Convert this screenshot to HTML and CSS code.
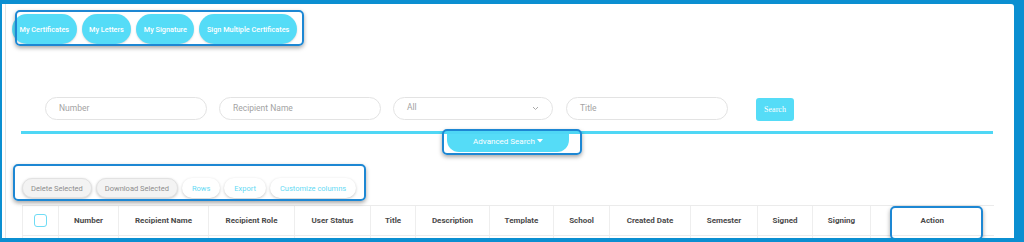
FILE: index.html
```html
<!DOCTYPE html>
<html lang="en">
<head>
  <meta charset="UTF-8">
  <title>Certificates</title>
  <link rel="stylesheet" href="styles.css">
</head>
<body>
  <div class="frame">
    <div class="mark nav-mark">
      <nav class="nav">
        <button class="pill">My Certificates</button>
        <button class="pill">My Letters</button>
        <button class="pill">My Signature</button>
        <button class="pill">Sign Multiple Certificates</button>
      </nav>
    </div>

    <div class="filters">
      <div class="field">Number</div>
      <div class="field">Recipient Name</div>
      <div class="field select">
        <span>All</span>
        <svg width="7" height="5" viewBox="0 0 7 5"><path d="M1 1 L3.5 3.5 L6 1" fill="none" stroke="#aaa" stroke-width="1"/></svg>
      </div>
      <div class="field">Title</div>
      <button class="search-btn">Search</button>
    </div>

    <div class="rule"></div>

    <div class="mark adv-mark">
      <button class="adv-btn">Advanced Search <svg class="caret" width="6" height="4" viewBox="0 0 6 4"><path d="M0 0 H6 L3 3.5 Z" fill="#fff"/></svg></button>
    </div>

    <div class="mark tools-mark">
      <div class="tools">
        <button class="tool muted">Delete Selected</button>
        <button class="tool muted">Download Selected</button>
        <button class="tool">Rows</button>
        <button class="tool">Export</button>
        <button class="tool">Customize columns</button>
      </div>
    </div>

    <table class="grid">
      <colgroup>
        <col style="width:36px"><col style="width:60px"><col style="width:90px"><col style="width:86px">
        <col style="width:76px"><col style="width:45px"><col style="width:74px"><col style="width:64px">
        <col style="width:56px"><col style="width:81px"><col style="width:67px"><col style="width:55px">
        <col style="width:58px"><col style="width:123px">
      </colgroup>
      <thead>
        <tr>
          <th><span class="check"></span></th>
          <th>Number</th>
          <th>Recipient Name</th>
          <th>Recipient Role</th>
          <th>User Status</th>
          <th>Title</th>
          <th>Description</th>
          <th>Template</th>
          <th>School</th>
          <th>Created Date</th>
          <th>Semester</th>
          <th>Signed</th>
          <th>Signing</th>
          <th class="action">Action</th>
        </tr>
      </thead>
      <tbody>
        <tr><td></td><td></td><td></td><td></td><td></td><td></td><td></td><td></td><td></td><td></td><td></td><td></td><td></td><td></td></tr>
      </tbody>
    </table>
  </div>
</body>
</html>
```

FILE: styles.css
```css
body {
  margin: 0;
  height: 242px;
  overflow: hidden;
  background: #0b8fd1;
  font-family: Roboto, "Liberation Sans", sans-serif;
}
.frame {
  margin: 4px 10px 0 2px;
  height: 234px;
  background: #fff;
  border-top-right-radius: 3px;
  overflow: hidden;
  box-shadow: inset 3px 0 0 #fff, inset 4px 0 0 #e4e4e4;
}
button {
  font-family: inherit;
  border: none;
  cursor: pointer;
  padding: 0;
  white-space: nowrap;
}

/* highlight boxes drawn over the content */
.mark {
  position: relative;
  box-sizing: border-box;
}
.mark::after {
  content: '';
  position: absolute;
  inset: 0;
  border: 2px solid #1d87d3;
  border-radius: 5px;
  box-shadow: 0 2px 4px rgba(0,0,0,0.35);
  pointer-events: none;
}

.nav-mark {
  margin: 6px 0 0 13px;
  width: 289px;
  height: 36px;
  padding-top: 4px;
}
.nav {
  display: flex;
  gap: 5px;
  margin-left: -3px;
}
.pill {
  flex: none;
  height: 30px;
  padding: 0 7.5px;
  border-radius: 15px;
  background: #55dcf7;
  color: #fff;
  font-size: 7.3px;
  font-weight: 500;
  box-shadow: 0 1px 2px rgba(0,0,0,0.15);
}

.filters {
  display: flex;
  align-items: flex-start;
  margin: 51px 0 0 43px;
}
.field {
  box-sizing: border-box;
  width: 162px;
  height: 23px;
  margin-right: 12px;
  padding-left: 13px;
  border: 1px solid #e3e3e3;
  border-radius: 12px;
  color: #a3a3a3;
  font-size: 8.5px;
  line-height: 21px;
}
.field.select {
  width: 160px;
  margin-right: 13px;
  display: flex;
  align-items: center;
  justify-content: space-between;
  padding-right: 13px;
}
.field.select span { margin-top: -2px; }
.field:nth-child(4) { margin-right: 28px; }
.search-btn {
  width: 38px;
  height: 23px;
  margin-top: 1px;
  border-radius: 3px;
  background: #55dcf7;
  color: #fff;
  font-family: "Liberation Serif", serif;
  font-size: 8px;
}

.rule {
  margin: 10px 0 0 19px;
  width: 972px;
  height: 3px;
  background: #4fd7f5;
}

.adv-mark {
  margin: -5px 0 0 440px;
  width: 140px;
  height: 26px;
  padding: 5px 0 0 5px;
}
.adv-btn {
  display: block;
  width: 122px;
  height: 18px;
  padding-bottom: 3px;
  border-radius: 0 0 12px 12px;
  background: #55dcf7;
  color: #fff;
  font-size: 8px;
}
.caret { vertical-align: 1px; }

.tools-mark {
  margin: 9px 0 0 11px;
  width: 353px;
  height: 37px;
  padding: 14px 0 0 9px;
}
.tools {
  display: flex;
  gap: 4px;
}
.tool {
  height: 20px;
  padding: 0 10px;
  border-radius: 10px;
  background: #fff;
  color: #66daf4;
  font-size: 7.5px;
  box-shadow: 0 1px 3px rgba(0,0,0,0.22);
}
.tool.muted {
  padding: 0 8px;
  background: #f3f3f3;
  color: #8e8e8e;
  border: 1px solid #e2e2e2;
}

.grid {
  margin: 4px 0 0 20px;
  width: 971px;
  table-layout: fixed;
  border-collapse: collapse;
}
.grid th {
  height: 29px;
  padding: 0;
  border-top: 1px solid #ebebeb;
  border-bottom: 1px solid #ebebeb;
  border-left: 1px solid #eeeeee;
  color: #4a4a4a;
  font-size: 8px;
  font-weight: 700;
  text-align: center;
}
.grid td {
  height: 6px;
  padding: 0;
  border-left: 1px solid #eeeeee;
}
.grid th.action { position: relative; }
.grid th.action::after {
  content: '';
  position: absolute;
  top: 0;
  left: 19px;
  right: 11px;
  bottom: -5px;
  border: 2px solid #1d87d3;
  border-radius: 5px;
  box-shadow: 0 2px 4px rgba(0,0,0,0.35);
}
.check {
  display: inline-block;
  width: 11px;
  height: 11px;
  margin-top: 2px;
  border: 1.5px solid #6fdcf5;
  border-radius: 3px;
}
```
